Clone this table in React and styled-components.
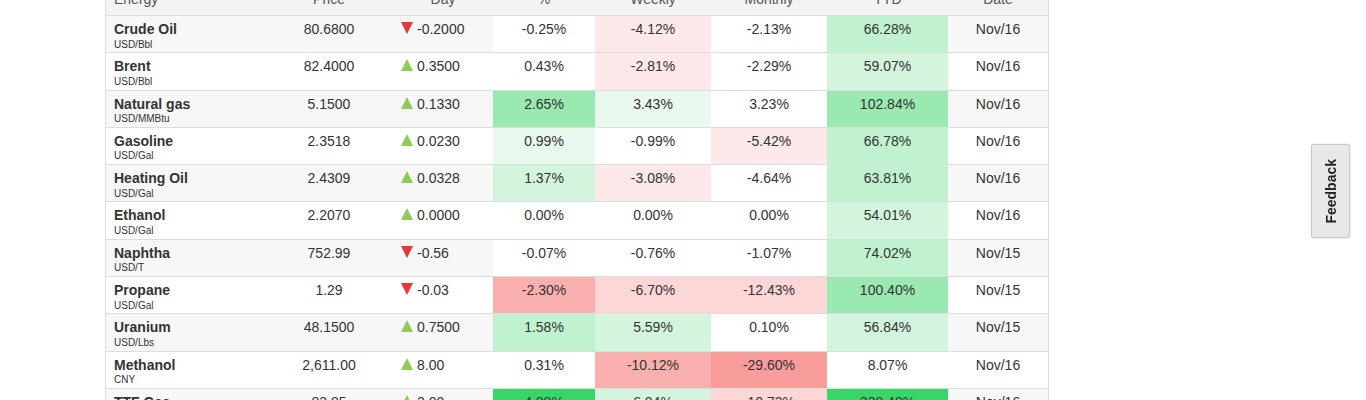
import React from "react";
import styled, { createGlobalStyle } from "styled-components";

const GlobalStyle = createGlobalStyle`
  html, body {
    margin: 0;
    padding: 0;
    background: #ffffff;
    font-family: "Liberation Sans", Arial, Helvetica, sans-serif;
    color: #333333;
  }
  * { box-sizing: border-box; }
`;

const COLS = "159px 128px 100px 102px 116px 116px 121px 100px";

const Page = styled.div`
  padding-left: 105px;
  overflow: hidden;
`;

const Table = styled.div`
  width: 944px;
  margin-top: -17px;
  border-left: 1px solid #dddddd;
  border-right: 1px solid #dddddd;
`;

const HeadRow = styled.div`
  display: grid;
  grid-template-columns: ${COLS};
  background: #f3f3f3;
  border-bottom: 1px solid #dddddd;
`;

const HeadCell = styled.div`
  padding: 8px;
  font-size: 14px;
  line-height: 16px;
  color: #555555;
  text-align: ${(p) => (p.$left ? "left" : "center")};
`;

const Row = styled.div`
  display: grid;
  grid-template-columns: ${COLS};
  height: 37.3px;
  background: ${(p) => (p.$alt ? "#f7f7f7" : "#ffffff")};
  border-bottom: 1px solid #dddddd;
`;

const NameCell = styled.div`
  padding: 5px 8px 0;
`;

const Name = styled.div`
  font-size: 14px;
  line-height: 16px;
  font-weight: bold;
  color: #333333;
`;

const Unit = styled.div`
  margin-top: 1.5px;
  font-size: 10px;
  line-height: 12px;
  color: #333333;
`;

const NumCell = styled.div`
  padding: 5px 4px 0;
  font-size: 14px;
  line-height: 16px;
  text-align: center;
  color: #333333;
  background: ${(p) => p.$bg || "transparent"};
`;

const DayCell = styled.div`
  padding: 5px 4px 0 8px;
  font-size: 14px;
  line-height: 16px;
  color: #333333;
  white-space: nowrap;
`;

const Arrow = styled.span`
  display: inline-block;
  width: 0;
  height: 0;
  margin-right: 4px;
  border-left: 6.5px solid transparent;
  border-right: 6.5px solid transparent;
  ${(p) =>
    p.$up
      ? "border-bottom: 12px solid #8dcc5b;"
      : "border-top: 12px solid #ee3535;"}
`;

const FeedbackButton = styled.button`
  position: fixed;
  right: 16px;
  top: 144px;
  width: 39px;
  height: 94px;
  padding: 0;
  display: flex;
  align-items: center;
  justify-content: center;
  background: #e8e8e8;
  border: 1px solid #c9c9c9;
  border-radius: 2px;
  box-shadow: 0 0 3px rgba(0, 0, 0, 0.12);
  cursor: pointer;
`;

const FeedbackLabel = styled.span`
  writing-mode: vertical-rl;
  transform: rotate(180deg);
  font-family: "Liberation Sans", Arial, sans-serif;
  font-size: 14px;
  font-weight: bold;
  color: #222222;
  line-height: 16px;
`;

const C = {
  g1: "#e9f9ee",
  g2: "#d4f5dd",
  g3: "#c1f2cf",
  g4: "#99e9b1",
  g5: "#38d667",
  r1: "#fde9e9",
  r2: "#fdd6d6",
  r3: "#fbb0b0",
  r4: "#f99c9c",
  w: "#ffffff",
};

const rows = [
  ["Crude Oil", "USD/Bbl", "80.6800", false, "-0.2000", ["-0.25%", "w"], ["-4.12%", "r1"], ["-2.13%", "w"], ["66.28%", "g3"], "Nov/16"],
  ["Brent", "USD/Bbl", "82.4000", true, "0.3500", ["0.43%", "w"], ["-2.81%", "r1"], ["-2.29%", "w"], ["59.07%", "g2"], "Nov/16"],
  ["Natural gas", "USD/MMBtu", "5.1500", true, "0.1330", ["2.65%", "g4"], ["3.43%", "g1"], ["3.23%", "w"], ["102.84%", "g4"], "Nov/16"],
  ["Gasoline", "USD/Gal", "2.3518", true, "0.0230", ["0.99%", "g1"], ["-0.99%", "w"], ["-5.42%", "r1"], ["66.78%", "g3"], "Nov/16"],
  ["Heating Oil", "USD/Gal", "2.4309", true, "0.0328", ["1.37%", "g2"], ["-3.08%", "r1"], ["-4.64%", "w"], ["63.81%", "g3"], "Nov/16"],
  ["Ethanol", "USD/Gal", "2.2070", true, "0.0000", ["0.00%", "w"], ["0.00%", "w"], ["0.00%", "w"], ["54.01%", "g2"], "Nov/16"],
  ["Naphtha", "USD/T", "752.99", false, "-0.56", ["-0.07%", "w"], ["-0.76%", "w"], ["-1.07%", "w"], ["74.02%", "g3"], "Nov/15"],
  ["Propane", "USD/Gal", "1.29", false, "-0.03", ["-2.30%", "r3"], ["-6.70%", "r2"], ["-12.43%", "r2"], ["100.40%", "g4"], "Nov/15"],
  ["Uranium", "USD/Lbs", "48.1500", true, "0.7500", ["1.58%", "g3"], ["5.59%", "g2"], ["0.10%", "w"], ["56.84%", "g2"], "Nov/15"],
  ["Methanol", "CNY", "2,611.00", true, "8.00", ["0.31%", "w"], ["-10.12%", "r3"], ["-29.60%", "r4"], ["8.07%", "w"], "Nov/16"],
  ["TTF Gas", "EUR/MWh", "83.85", true, "3.00", ["4.88%", "g5"], ["6.04%", "g2"], ["-10.73%", "r2"], ["338.48%", "g5"], "Nov/16"],
];

const heads = ["Energy", "Price", "Day", "%", "Weekly", "Monthly", "YTD", "Date"];

export default function App() {
  return (
    <Page>
      <GlobalStyle />
      <Table>
        <HeadRow>
          {heads.map((h, i) => (
            <HeadCell key={h} $left={i === 0}>
              {h}
            </HeadCell>
          ))}
        </HeadRow>
        {rows.map((r, i) => (
          <Row key={r[0]} $alt={i % 2 === 0}>
            <NameCell>
              <Name>{r[0]}</Name>
              <Unit>{r[1]}</Unit>
            </NameCell>
            <NumCell>{r[2]}</NumCell>
            <DayCell>
              <Arrow $up={r[3]} />
              {r[4]}
            </DayCell>
            {[r[5], r[6], r[7], r[8]].map(([v, c], j) => (
              <NumCell key={j} $bg={C[c]}>
                {v}
              </NumCell>
            ))}
            <NumCell>{r[9]}</NumCell>
          </Row>
        ))}
      </Table>
      <FeedbackButton type="button">
        <FeedbackLabel>Feedback</FeedbackLabel>
      </FeedbackButton>
    </Page>
  );
}
